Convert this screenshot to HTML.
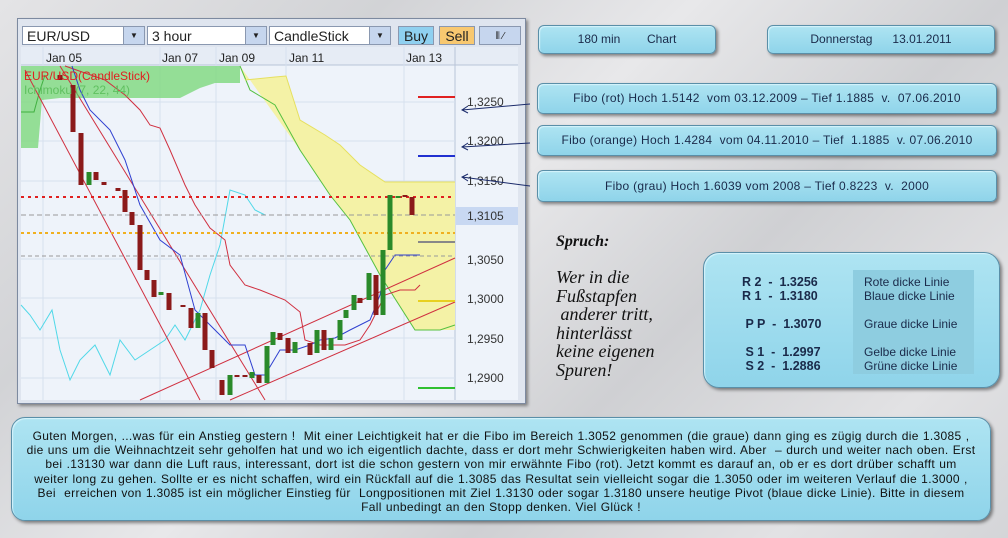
<!DOCTYPE html>
<html><head><meta charset="utf-8"><style>
body{margin:0;width:1008px;height:538px;overflow:hidden;position:relative;font-family:"Liberation Sans",sans-serif;
background:linear-gradient(135deg,#e4e4e6 0%,#d2d3d6 25%,#e8e8ea 45%,#cfd0d3 65%,#e2e2e4 85%,#d4d5d8 100%);}
.box{position:absolute;background:linear-gradient(#aee4f2,#8fd4ea);border:1px solid #5a8fa8;border-radius:6px;box-shadow:2px 2px 3px rgba(0,0,0,.45), inset 1px 1px 1px #d8f4fc;color:#1a2a4a;font-size:12px;text-align:center;}
.chart{position:absolute;left:17px;top:18px;width:507px;height:384px;background:#dfe5ef;border:1px solid #7d8aa0;box-shadow:2px 2px 3px rgba(0,0,0,.4);}
.sel{position:absolute;top:7px;height:19px;background:#fff;border:1px solid #8a98b0;font-size:14px;line-height:19px;padding-left:4px;box-sizing:border-box;color:#222}
.dd{position:absolute;right:0;top:0;width:20px;height:17px;background:#c6d6ee;border-left:1px solid #8a98b0;font-size:8px;text-align:center;line-height:17px}
.spr{position:absolute;left:556px;font-family:"Liberation Serif",serif;font-style:italic;color:#111;}
</style></head><body>

<div class="chart">
 <div class="sel" style="left:4px;width:123px">EUR/USD<div class="dd">▼</div></div>
 <div class="sel" style="left:129px;width:120px">3 hour<div class="dd">▼</div></div>
 <div class="sel" style="left:251px;width:122px">CandleStick<div class="dd">▼</div></div>
 <div class="sel" style="left:380px;width:36px;background:#8fd0f0;text-align:center;padding:0">Buy</div>
 <div class="sel" style="left:421px;width:36px;background:#f8c870;text-align:center;padding:0">Sell</div>
 <div class="sel" style="left:461px;width:42px;background:#c6d6ee;font-size:10px;padding:0;text-align:center">⫴ ⁄</div>
</div>
<svg style="position:absolute;left:0;top:0" width="530" height="410">
 <rect x="21" y="47" width="434" height="353" fill="#eef3fa"/>
 <rect x="455" y="47" width="63" height="353" fill="#eef3fa"/>
 <rect x="21" y="47" width="497" height="18" fill="#e6ecf5"/>
 <line x1="21" y1="65" x2="518" y2="65" stroke="#b8c4d8"/>
 <line x1="455" y1="47" x2="455" y2="400" stroke="#b8c4d8"/>
 <g stroke="#d6e0ee" stroke-width="1">
  <line x1="43" y1="47" x2="43" y2="400"/><line x1="160" y1="47" x2="160" y2="400"/><line x1="216" y1="47" x2="216" y2="400"/><line x1="286" y1="47" x2="286" y2="400"/><line x1="404" y1="47" x2="404" y2="400"/>
  <line x1="21" y1="102" x2="455" y2="102"/><line x1="21" y1="141" x2="455" y2="141"/><line x1="21" y1="181" x2="455" y2="181"/><line x1="21" y1="259" x2="455" y2="259"/><line x1="21" y1="298" x2="455" y2="298"/><line x1="21" y1="338" x2="455" y2="338"/><line x1="21" y1="378" x2="455" y2="378"/>
 </g>
 <g font-size="12" fill="#222"><text x="46" y="62">Jan 05</text><text x="162" y="62">Jan 07</text><text x="219" y="62">Jan 09</text><text x="289" y="62">Jan 11</text><text x="406" y="62">Jan 13</text></g>
 <polygon points="21,66 240,66 240,83 215,83 200,88 180,98 60,98 42,100 38,148 21,148" fill="#7dd87d" opacity=".8"/>
 <polyline points="21,112 34,112 40,90 45,75" fill="none" stroke="#40b040"/>
 <polygon points="240,66 245,80 275,77 286,76 300,120 325,135 340,145 360,165 385,182 455,182 455,330 440,330 415,330 380,275 350,220 330,195 300,150 240,66" fill="#f4f2a6"/>
 <polyline points="240,66 250,90 275,105 300,150 330,195 350,220 380,275 415,330 440,330 455,325" fill="none" stroke="#55c040"/>
 <polyline points="245,80 275,77 286,76 300,120 325,135 340,145 360,165 385,182 455,182" fill="none" stroke="#e6e060"/>
 <polyline points="21,305 30,315 40,330 52,310 60,350 70,380 80,360 95,345 110,375 120,340 135,360 150,350 165,340 175,325 185,340 200,310 210,275 220,245 230,190 245,195 255,210 265,215" fill="none" stroke="#50d8e8"/>
 <g stroke="#d03040" fill="none" stroke-width="1">
  <polyline points="65,66 105,80 125,95 140,110 150,125 160,128 170,150 185,185 195,205 210,228 225,240 230,265 245,285 260,290 285,300 300,312 305,340 320,345 345,345 360,340 370,325 385,295 400,290 415,290 420,285"/>
  <line x1="25" y1="70" x2="200" y2="400"/><line x1="60" y1="66" x2="265" y2="400"/>
  <line x1="140" y1="400" x2="455" y2="258"/><line x1="230" y1="400" x2="455" y2="302"/>
 </g>
 <polyline points="72,66 80,90 90,110 110,130 125,160 140,205 160,240 180,255 195,310 215,330 230,345 245,345 255,375 265,375 280,350 295,350 310,345 320,340 335,338 350,330 370,320 380,295 385,270 395,255 420,255" fill="none" stroke="#3040d0"/>
 <line x1="21" y1="197" x2="455" y2="197" stroke="#e02020" stroke-width="2" stroke-dasharray="3,4"/>
 <line x1="21" y1="215" x2="455" y2="215" stroke="#999" stroke-dasharray="5,3"/>
 <line x1="21" y1="233" x2="455" y2="233" stroke="#f0b020" stroke-width="2" stroke-dasharray="3,3"/>
 <line x1="21" y1="256" x2="455" y2="256" stroke="#999" stroke-dasharray="4,3"/>
 <line x1="418" y1="97" x2="455" y2="97" stroke="#e02020" stroke-width="2"/>
 <line x1="418" y1="156" x2="455" y2="156" stroke="#2030d0" stroke-width="2"/>
 <line x1="418" y1="242" x2="455" y2="242" stroke="#888" stroke-width="2"/>
 <line x1="418" y1="301" x2="455" y2="301" stroke="#e8d020" stroke-width="2"/>
 <line x1="418" y1="388" x2="455" y2="388" stroke="#30c030" stroke-width="2"/>
 <g stroke-width="5">
 <path stroke="#8b1a1a" d="M60 75v5M73 85v47M81 133v52M96 172v8M104 182v3M118 188v3M125 190v22M132 212v13M140 225v45M147 270v10M154 280v17M169 293v17M183 305v2M191 308v20M205 313v37M212 350v18M222 380v15M237 375v2M245 375v2M259 375v8M280 333v7M288 338v15M310 343v12M324 330v20M360 298v5M376 275v40M405 195v2M412 197v18"/>
 <path stroke="#2a8a2a" d="M89 172v13M161 292v3M198 313v15M230 375v20M252 372v6M267 346v37M273 332v13M295 342v11M317 330v23M331 338v12M340 320v20M346 310v8M354 295v15M369 273v27M383 250v65M390 195v55M398 196v2"/>
 </g>
 <g font-size="12" fill="#e02020"><text x="24" y="80">EUR/USD(CandleStick)</text></g>
 <g font-size="12" fill="#60c060"><text x="24" y="94">Ichimoku (7, 22, 44)</text></g>
 <rect x="456" y="207" width="62" height="18" fill="#c8d8f2"/>
 <g font-size="12" fill="#333"><text x="467" y="106">1,3250</text><text x="467" y="145">1,3200</text><text x="467" y="185">1,3150</text><text x="467" y="220">1,3105</text><text x="467" y="264">1,3050</text><text x="467" y="303">1,3000</text><text x="467" y="343">1,2950</text><text x="467" y="382">1,2900</text></g>
 <g stroke="#1a2a6a" fill="none"><path d="M530 104L462 110M468 106l-6 4 6 3"/><path d="M530 143L462 147M468 143l-6 4 6 3"/><path d="M530 186L462 177M468 174l-6 3 6 4"/></g>
</svg>

<div class="box" style="left:538px;top:25px;width:176px;height:27px;line-height:27px">180 min &nbsp;&nbsp;&nbsp;&nbsp;&nbsp;&nbsp; Chart</div>
<div class="box" style="left:767px;top:25px;width:226px;height:27px;line-height:27px">Donnerstag &nbsp;&nbsp;&nbsp;&nbsp; 13.01.2011</div>
<div class="box" style="left:537px;top:83px;width:458px;height:29px;line-height:29px;letter-spacing:0.3px">Fibo (rot) Hoch 1.5142 &nbsp;vom 03.12.2009 – Tief 1.1885 &nbsp;v. &nbsp;07.06.2010</div>
<div class="box" style="left:537px;top:125px;width:458px;height:29px;line-height:29px;letter-spacing:0.3px">Fibo (orange) Hoch 1.4284 &nbsp;vom 04.11.2010 – Tief &nbsp;1.1885 &nbsp;v. 07.06.2010</div>
<div class="box" style="left:537px;top:170px;width:458px;height:30px;line-height:30px;letter-spacing:0.3px">Fibo (grau) Hoch 1.6039 vom 2008 – Tief 0.8223 &nbsp;v. &nbsp;2000</div>

<div class="spr" style="top:233px;font-size:16px;font-weight:bold">Spruch:</div>
<div class="spr" style="top:268px;font-size:18px;line-height:18.5px">Wer in die<br>Fußstapfen<br>&nbsp;anderer tritt,<br>hinterlässt<br>keine eigenen<br>Spuren!</div>

<div class="box" style="left:703px;top:252px;width:295px;height:134px;border-radius:16px;text-align:left">
 <div style="position:absolute;left:149px;top:17px;width:121px;height:104px;background:#8ecde0"></div>
 <div style="position:absolute;left:38px;top:22px;font-weight:bold;font-size:12.5px;line-height:14px;white-space:pre">R 2  -  1.3256
R 1  -  1.3180

 P P  -  1.3070

 S 1  -  1.2997
 S 2  -  1.2886</div>
 <div style="position:absolute;left:160px;top:22px;font-size:12px;line-height:14px;white-space:pre">Rote dicke Linie
Blaue dicke Linie

Graue dicke Linie

Gelbe dicke Linie
Grüne dicke Linie</div>
</div>

<div class="box" style="left:11px;top:417px;width:980px;height:104px;border-radius:14px;font-size:12px;line-height:14.2px;color:#111;padding-top:11px;box-sizing:border-box;white-space:nowrap;letter-spacing:0.33px;word-spacing:0.5px">
Guten Morgen, ...was für ein Anstieg gestern ! &nbsp;Mit einer Leichtigkeit hat er die Fibo im Bereich 1.3052 genommen (die graue) dann ging es zügig durch die 1.3085 ,<br>
die uns um die Weihnachtzeit sehr geholfen hat und wo ich eigentlich dachte, dass er dort mehr Schwierigkeiten haben wird. Aber &nbsp;– durch und weiter nach oben. Erst<br>
bei .13130 war dann die Luft raus, interessant, dort ist die schon gestern von mir erwähnte Fibo (rot). Jetzt kommt es darauf an, ob er es dort drüber schafft um<br>
weiter long zu gehen. Sollte er es nicht schaffen, wird ein Rückfall auf die 1.3085 das Resultat sein vielleicht sogar die 1.3050 oder im weiteren Verlauf die 1.3000 ,<br>
Bei &nbsp;erreichen von 1.3085 ist ein möglicher Einstieg für &nbsp;Longpositionen mit Ziel 1.3130 oder sogar 1.3180 unsere heutige Pivot (blaue dicke Linie). Bitte in diesem<br>
Fall unbedingt an den Stopp denken. Viel Glück !
</div>
</body></html>
